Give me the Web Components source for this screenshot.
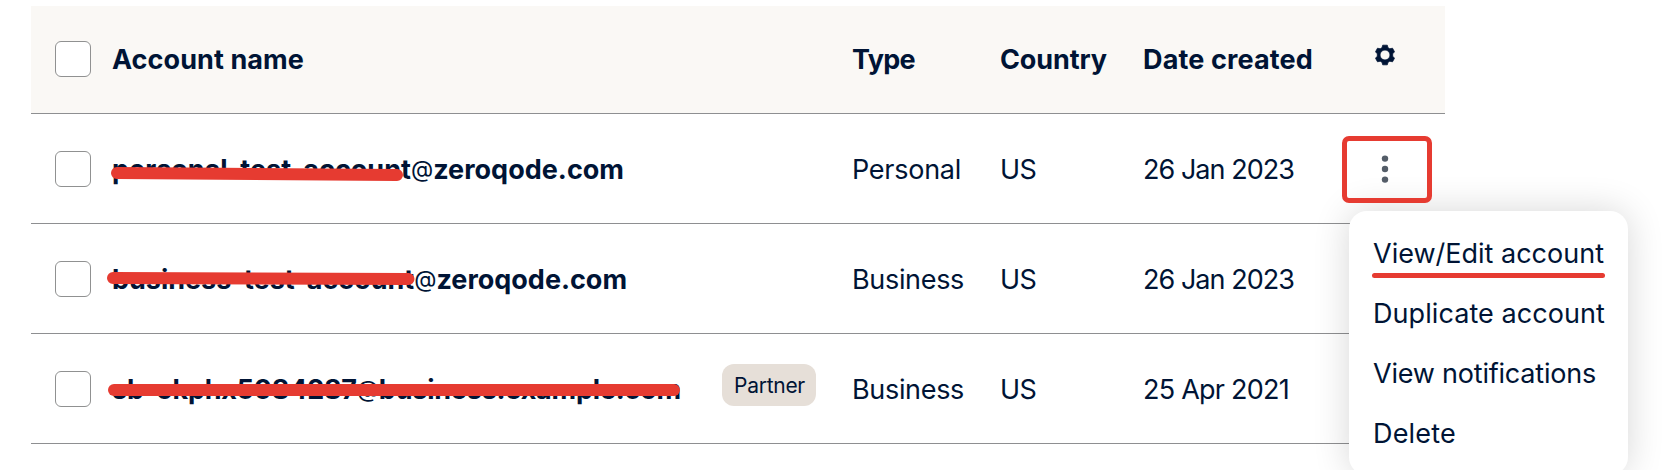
<!DOCTYPE html>
<html lang="en">
<head>
<meta charset="utf-8">
<title>Sandbox accounts</title>
<style>
body{margin:0;width:1679px;height:470px;overflow:hidden;background:#fff;color:#001435;font:27px/1 Inter,"Liberation Sans",sans-serif}
</style>
</head>
<body>
<account-page></account-page>
<script>
const define = (name, html, setup) => customElements.define(name, class extends HTMLElement {
  constructor(){ super(); this.attachShadow({mode:'open'}).innerHTML = html; }
  connectedCallback(){ if(setup) setup(this, this.shadowRoot); }
});

// Text label whose tracking is tuned so the run fills a given width.
define('fit-text', `<style>:host{display:inline-block;white-space:nowrap;line-height:36px;font-kerning:normal}span{display:inline-block}</style><span><slot></slot></span>`,
  (el, root) => {
    const s = root.querySelector('span'), w = +el.getAttribute('w');
    const n = el.textContent.length;
    s.style.letterSpacing = '0px';
    const d = (w - s.getBoundingClientRect().width) / n;
    s.style.letterSpacing = d + 'px';
  });

define('check-box', `<style>:host{display:block;box-sizing:border-box;width:36px;height:36px;border:1px solid #909191;border-radius:6px;background:#fff}</style>`);

define('type-badge', `<style>:host{display:flex;align-items:center;justify-content:center;width:94px;height:42px;box-sizing:border-box;padding:1px 0 0 1px;margin-bottom:7px;border-radius:12px;background:#e6dfd8;font-size:21px;font-weight:400}</style><slot></slot>`);

define('gear-icon', `<style>:host{display:block;width:20px;height:22px}svg{display:block}</style>
<svg width="20" height="22" viewBox="-10 -11 20 22"><path fill="#001435" stroke="#001435" stroke-width=".8" stroke-linejoin="round" fill-rule="evenodd" d="M-2.3-9.8H2.3L3-7.2 4.8-6.2 7.5-6.8 9.5-3.2 7.7-1.2V1.2L9.5 3.2 7.5 6.8 4.8 6.2 3 7.2 2.3 9.8H-2.3L-3 7.2-4.8 6.2-7.5 6.8-9.5 3.2-7.7 1.2V-1.2L-9.5-3.2-7.5-6.8-4.8-6.2-3-7.2ZM0-5A5 5 0 1 0 0 5 5 5 0 1 0 0-5Z"/></svg>`);

define('more-button', `<style>:host{display:flex;box-sizing:border-box;width:90px;height:67px;border:5px solid #e63b31;border-radius:7px;position:relative;z-index:3}svg{display:block}</style>
<svg width="80" height="57" viewBox="0 0 80 57" fill="#545d68"><circle cx="38" cy="17.6" r="3.2"/><circle cx="38" cy="28" r="3.2"/><circle cx="38" cy="38.6" r="3.2"/></svg>`);

// Marker stroke drawn over an account name; coordinates are relative to the row.
define('marker-line', `<style>:host{position:absolute;left:0;top:0;pointer-events:none}svg{display:block;overflow:visible}</style><svg width="1" height="1"><path fill="none" stroke="#e63b31" stroke-width="12" stroke-linecap="round"/></svg>`,
  (el, root) => root.querySelector('path').setAttribute('d', el.getAttribute('d')));

define('account-row', `<style>
:host{display:grid;box-sizing:border-box;position:relative;width:1414px;height:110px;grid-template-columns:36px 761px 148px 143px 199px 1fr;padding-left:24px;border-bottom:1px solid #8e8f91;align-items:center}
:host([head]){height:108px;background:#faf8f5;font-weight:700}
.name{display:flex;align-items:center;justify-content:space-between;font-weight:700;padding:0 36px 0 21px}
:host(:not([head])) :is(.name,.icon),:host(:not([head])) ::slotted(fit-text){padding-top:2px}
:host(:not([head])) .name{padding-top:0}
:host([head]) check-box{margin-bottom:1px}
:host([head]) .icon{padding:0 0 9px 33px}
</style><check-box></check-box><div class="name"><slot name="name"></slot><slot name="badge"></slot></div><slot name="type"></slot><slot name="country"></slot><slot name="date"></slot><div class="icon"><slot name="action"></slot></div><slot name="mark"></slot>`);

define('menu-item', `<style>:host{display:flex;flex-direction:column;height:60px;box-sizing:border-box;padding:13px 24px 0}:host([marked])::after{content:"";height:5px;width:233px;margin-top:1px;margin-left:-1px;border-radius:3px;background:#e63b31}</style><slot></slot>`);

define('action-menu', `<style>:host{display:block;box-sizing:border-box;position:absolute;left:1349px;top:211px;width:279px;height:264px;padding:12px 0;border-radius:18px;background:#fff;box-shadow:0 0 36px rgba(0,0,0,.16);z-index:2}</style>
<menu-item marked><fit-text w="231">View/Edit account</fit-text></menu-item>
<menu-item><fit-text w="232">Duplicate account</fit-text></menu-item>
<menu-item><fit-text w="223">View notifications</fit-text></menu-item>
<menu-item><fit-text w="83">Delete</fit-text></menu-item>`);

define('account-page', `<style>:host{display:block;position:relative;padding:6px 0 0 31px}.at{font-size:23px;font-weight:400;vertical-align:2px;line-height:1}</style>
<account-row head>
<fit-text slot="name" w="192">Account name</fit-text><fit-text slot="type" w="63">Type</fit-text><fit-text slot="country" w="107">Country</fit-text><fit-text slot="date" w="170">Date created</fit-text><gear-icon slot="action"></gear-icon>
</account-row>
<account-row>
<fit-text slot="name" w="512">personal-test-account<span class="at">@</span>zeroqode.com</fit-text><fit-text slot="type" w="109">Personal</fit-text><fit-text slot="country" w="36">US</fit-text><fit-text slot="date" w="151">26 Jan 2023</fit-text><more-button slot="action"></more-button>
<marker-line slot="mark" d="M86 59L366 61"></marker-line>
</account-row>
<account-row>
<fit-text slot="name" w="515">business-test-account<span class="at">@</span>zeroqode.com</fit-text><fit-text slot="type" w="112">Business</fit-text><fit-text slot="country" w="36">US</fit-text><fit-text slot="date" w="151">26 Jan 2023</fit-text>
<marker-line slot="mark" d="M82 54L377.500 55"></marker-line>
</account-row>
<account-row>
<fit-text slot="name" w="569">sb-okphx5084287<span class="at">@</span>business.example.com</fit-text><type-badge slot="badge"><fit-text w="71">Partner</fit-text></type-badge><fit-text slot="type" w="112">Business</fit-text><fit-text slot="country" w="36">US</fit-text><fit-text slot="date" w="146">25 Apr 2021</fit-text>
<marker-line slot="mark" d="M83 56L643 56"></marker-line>
</account-row>
<action-menu></action-menu>`);
</script>
</body>
</html>
